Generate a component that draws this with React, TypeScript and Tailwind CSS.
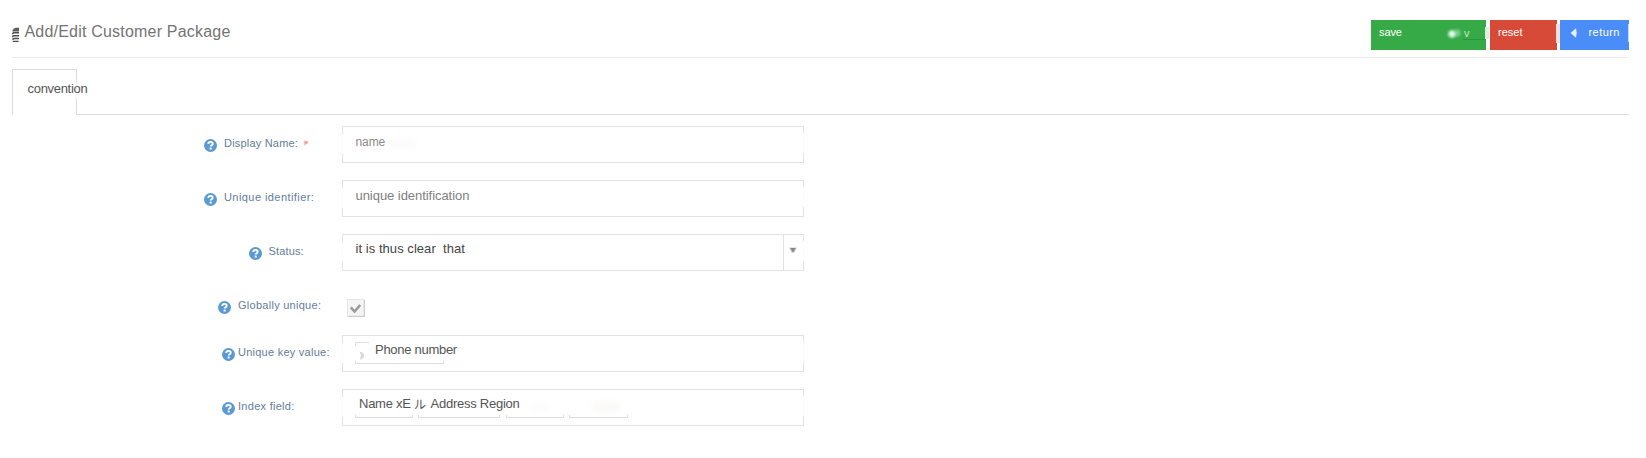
import type { ReactNode } from "react";

function HelpIcon({ className }: { className: string }) {
  return (
    <svg viewBox="0 0 13 13" className={`mt-[13px] h-[13px] w-[13px] shrink-0 ${className}`}>
      <circle cx="6.5" cy="6.5" r="6.5" fill="#5b99d1" />
      <path d="M4.3 5.1C4.3 3.6 5.2 2.9 6.5 2.9s2.2.7 2.2 1.9c0 1.4-2 1.5-2 2.8" fill="none" stroke="#fff" strokeWidth="1.9" />
      <rect x="5.6" y="8.6" width="2.1" height="1.9" fill="#fff" />
    </svg>
  );
}

function EdgeFade() {
  return (
    <>
      <span className="absolute top-[7px] -left-px h-[20px] w-px bg-[#fbfbfb]" />
      <span className="absolute top-[6px] -right-px h-[20px] w-px bg-[#fbfbfb]" />
    </>
  );
}

function Field({ children }: { children?: ReactNode }) {
  return (
    <div className="relative flex h-[37px] w-[462px] border border-[#e2e2e2]">
      <EdgeFade />
      {children}
    </div>
  );
}

type RowProps = {
  label: string;
  iconClass: string;
  textClass: string;
  rowClass: string;
  required?: boolean;
  children: ReactNode;
};

function Row({ label, iconClass, textClass, rowClass, required, children }: RowProps) {
  return (
    <div className={`flex ${rowClass}`}>
      <div className="flex h-[37px] w-[342px] shrink-0">
        <HelpIcon className={iconClass} />
        <span className={`pt-[10px] text-[11px] leading-[14px] whitespace-pre text-[#647d9b] ${textClass}`}>{label}</span>
        {required && (
          <svg viewBox="0 0 6 7" className="mt-[14px] ml-[5px] h-[7px] w-[6px]">
            <path d="M.8.6l4.6.6-.9 2.8-1.7.4-.8 2.2L.8 4z" fill="#f7c3be" />
            <path d="M1.6 1.4l2.8.3-.6 1.7-1.6.3z" fill="#ee9690" />
          </svg>
        )}
      </div>
      {children}
    </div>
  );
}

function TagEdge({ className }: { className: string }) {
  return <span className={`h-[3px] border-x border-b border-[#dedede] ${className}`} />;
}

export default function App() {
  return (
    <div className="h-[458px] w-[1646px] overflow-hidden bg-white font-['Liberation_Sans',sans-serif]">
      <header className="ml-3 flex h-[58px] w-[1617px] border-b border-[#ebebeb]">
        <svg viewBox="0 0 8 15" className="mt-[27px] h-[15px] w-[8px]">
          <path d="M.4 3.4Q1.6.8 4 .8h3v3.6H.4z" fill="#5c5c5c" />
          <path d="M0 7l1.6-1.2H7M0 10l1.6-1.3H7M.4 12.6l1.4-1H7M.8 14.4h5.8" fill="none" stroke="#4c4c4c" strokeWidth="1.5" />
        </svg>
        <h1 className="mt-[22px] ml-[4.5px] text-[16px] leading-[20px] tracking-[0.2px] whitespace-pre text-[#737373]">Add/Edit Customer Package</h1>
        <div className="mt-5 ml-auto flex h-[30px] text-[11px] leading-[14px] text-white">
          <button className="relative flex w-[115px] bg-[#35aa47] pt-[5px] pl-2">
            <span className="w-[67px] text-left tracking-[-0.1px]">save</span>
            <svg viewBox="0 0 18 14" className="mt-[2px] h-[14px] w-[18px]">
              <defs>
                <radialGradient id="saveGlow">
                  <stop offset="0" stopColor="#fff" />
                  <stop offset=".4" stopColor="#c9f5dd" stopOpacity=".9" />
                  <stop offset="1" stopColor="#7fd08b" stopOpacity="0" />
                </radialGradient>
              </defs>
              <ellipse cx="11" cy="6" rx="6" ry="6" fill="url(#saveGlow)" opacity=".4" />
              <circle cx="6" cy="7" r="6" fill="url(#saveGlow)" />
            </svg>
            <span className="pt-[1px] text-[#c4eaca]">v</span>
            <span className="absolute top-[19px] right-0 h-px w-[23px] bg-[#2e953e]" />
            <span className="absolute top-[7px] right-[-3px] h-[12px] w-[4px] bg-[#dfeee0] blur-[0.5px]" />
          </button>
          <button className="relative ml-1 flex w-[67px] bg-[#d84a38] pt-[5px] pl-[8px]">
            <span>reset</span>
            <span className="absolute top-[4px] -right-[3px] h-[19px] w-[4px] bg-[#f6dedb] blur-[0.5px]" />
          </button>
          <button className="relative ml-[3px] flex w-[69px] bg-[#4b8df8] pt-[5px] pl-[10px]">
            <svg viewBox="0 0 8 12" className="mt-[2px] h-[12px] w-[8px]">
              <path d="M.6 6L6 1.2q1.4 4.8 0 9.6z" fill="#e8f1ff" />
            </svg>
            <span className="ml-[10.5px] tracking-[0.45px]">return</span>
            <span className="absolute top-[4px] right-0 h-[18px] w-px bg-[#c4daff]" />
          </button>
        </div>
      </header>

      <nav className="mt-[11px] ml-3 flex h-[46px] w-[1617px]">
        <div className="relative h-[46px] w-[65px] border border-b-0 border-[#dcdcdc]">
          <span className="absolute top-[12px] -right-px h-[17px] w-px bg-[#f7f7f7]" />
          <span className="relative block pt-[11px] pl-[14.5px] text-[13px] leading-[16px] tracking-[-0.3px] text-[#555]">convention</span>
        </div>
        <div className="flex-1 border-b border-[#dcdcdc]" />
      </nav>

      <main className="pt-[11px]">
        <Row label="Display Name:" iconClass="ml-[204px]" textClass="ml-[7px] tracking-[0.2px]" rowClass="h-[54px]" required>
          <Field>
            <span className="pt-[8px] pl-[12.5px] text-[12px] leading-[15px] tracking-[-0.1px] text-[#8b8b8b]">name</span>
            <span className="mt-[12px] ml-[4px] h-[9px] w-[27px] bg-[#fbfbfb] blur-[2px]" />
          </Field>
        </Row>
        <Row label="Unique identifier:" iconClass="ml-[204px]" textClass="ml-[7px] tracking-[0.43px]" rowClass="h-[54px]">
          <Field>
            <span className="pt-[7px] pl-[12.5px] text-[13px] leading-[16px] tracking-[-0.05px] text-[#808080]">unique identification</span>
          </Field>
        </Row>
        <Row label="Status:" iconClass="ml-[248.5px]" textClass="ml-[7px] tracking-[0.15px]" rowClass="h-[54px]">
          <Field>
            <span className="pt-[6px] pl-[12.5px] text-[13px] leading-[16px] tracking-[0.05px] whitespace-pre text-[#444]">{"it is thus clear  that"}</span>
            <div className="ml-auto flex w-[20px] border-l border-[#e2e2e2]">
              <svg viewBox="0 0 8 7" className="mt-[12px] ml-[5px] h-[7px] w-[8px]">
                <path d="M.2.6h7.6L5.4 5.8H2.6z" fill="#cfcfcf" />
                <path d="M1.2 1h5.6L4 5.4z" fill="#888" />
              </svg>
            </div>
          </Field>
        </Row>
        <Row label="Globally unique:" iconClass="ml-[218px]" textClass="ml-[7px] tracking-[0.27px]" rowClass="h-[47px]">
          <svg viewBox="0 0 18 18" className="mt-[11px] ml-[5px] h-[18px] w-[18px]">
            <rect x=".5" y=".5" width="16.5" height="17" fill="#f5f5f5" stroke="#e6e6e6" />
            <path d="M1 17.3h16.4V1" fill="none" stroke="#cdcdcd" strokeWidth="1.2" />
            <path d="M3.8 8.4l3.8 4.2L13.2 6" fill="none" stroke="#9a9a9a" strokeWidth="2.5" />
          </svg>
        </Row>
        <Row label="Unique key value:" iconClass="ml-[221.5px]" textClass="ml-[3.5px] tracking-[0.25px]" rowClass="h-[54px]">
          <Field>
            <div className="absolute top-[6px] left-[12px] h-[22px] w-[14px] border-t border-[#e0e0e0]">
              <span className="absolute top-0 left-0 h-[3px] w-px bg-[#e0e0e0]" />
              <svg viewBox="0 0 7 9" className="absolute top-[8px] left-[4px] h-[9px] w-[7px]">
                <path d="M.6.8Q4.6.6 5.2 4.4 4.8 8.4.8 8.6L2 4.6z" fill="#dadada" />
              </svg>
            </div>
            <TagEdge className="absolute top-[25px] left-[12px] w-[89px]" />
            <span className="relative pt-[6px] pl-[32px] text-[13px] leading-[16px] tracking-[-0.28px] text-[#555]">Phone number</span>
          </Field>
        </Row>
        <Row label="Index field:" iconClass="ml-[221.5px]" textClass="ml-[3.5px] tracking-[0.28px]" rowClass="h-[54px]">
          <Field>
            <div className="absolute top-[25px] left-[12px] flex">
              <TagEdge className="w-[58px]" />
              <TagEdge className="ml-[5px] w-[82px]" />
              <TagEdge className="ml-[6px] w-[58px]" />
              <TagEdge className="ml-[5px] w-[59px]" />
            </div>
            <div className="relative flex pt-[6px] pl-[16px] text-[13px] leading-[16px] tracking-[-0.25px] text-[#555]">
              <span className="w-[55px] whitespace-pre">Name xE</span>
              <span className="mt-px h-[16px] w-[16.5px] text-[12px] font-['Liberation_Sans','Noto_Sans_CJK_JP',sans-serif]">ル</span>
              <span className="whitespace-pre">Address Region</span>
            </div>
            <span className="mt-[12px] ml-[10px] h-[10px] w-[18px] bg-[#fcfcfc] blur-[2px]" />
            <span className="mt-[12px] ml-[44px] h-[10px] w-[28px] bg-[#fbfaf9] blur-[2px]" />
          </Field>
        </Row>
      </main>
    </div>
  );
}
